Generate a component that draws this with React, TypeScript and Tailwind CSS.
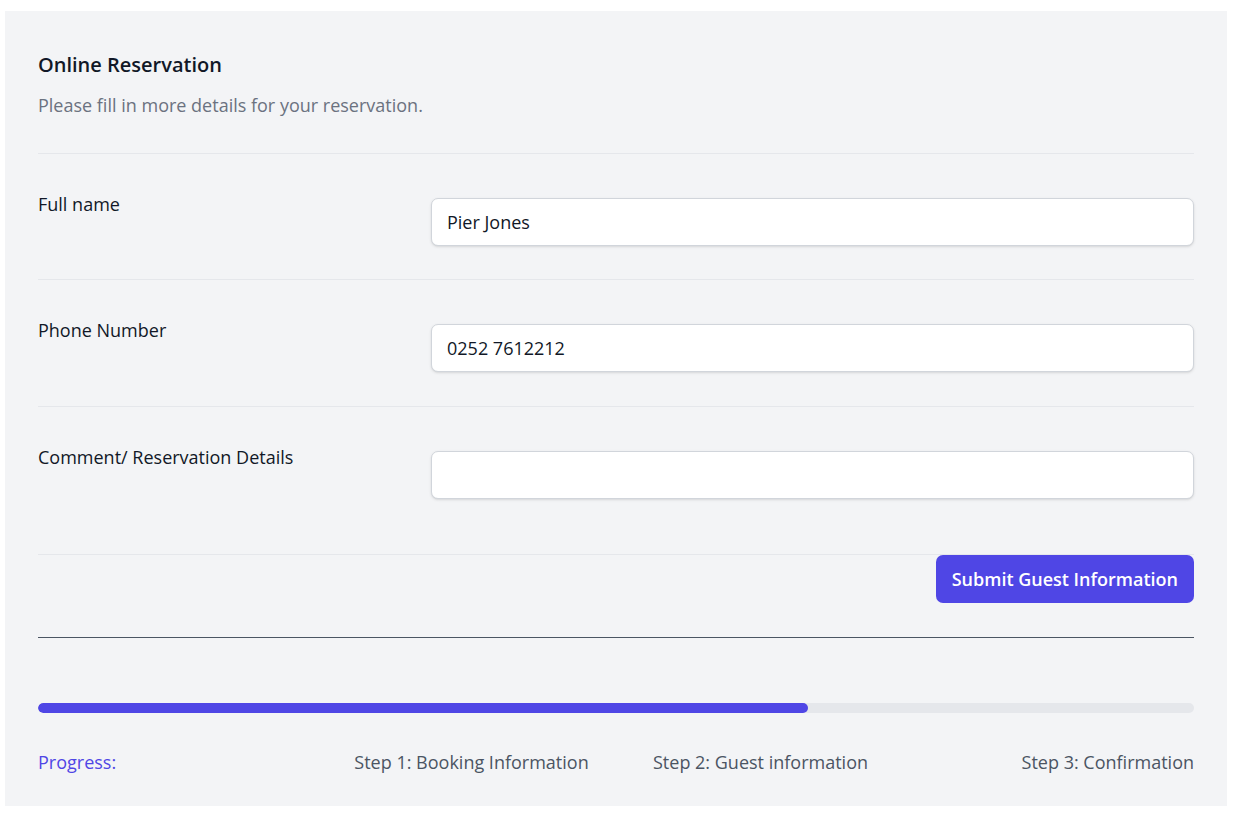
import React from "react";

const rows = [
  { label: "Full name", value: "Pier Jones", pb: "pb-[33px]" },
  { label: "Phone Number", value: "0252 7612212", pb: "pb-[34px]" },
  { label: "Comment/ Reservation Details", value: "", pb: "pb-[55px]" },
];

export default function App() {
  return (
    <div className="min-h-screen bg-white pl-[5px] pt-[11px] font-['Open_Sans',sans-serif]">
      <div className="w-[1222px] bg-[#f3f4f6] px-[33px] pt-[40px] pb-[30px]">
        <h2 className="text-[20px] font-semibold leading-[28px] text-[#111827]">Online Reservation</h2>
        <p className="mt-[12px] text-[18px] leading-[28px] text-[#6b7280]">
          Please fill in more details for your reservation.
        </p>
        <div className="mt-[34px] border-t border-[#e5e7eb]">
          {rows.map((r) => (
            <div
              key={r.label}
              className={`grid grid-cols-[373px_1fr] gap-x-[20px] border-b border-[#e5e7eb] pt-[36px] ${r.pb}`}
            >
              <label className="text-[18px] leading-[28px] text-[#111827]">{r.label}</label>
              <input
                type="text"
                defaultValue={r.value}
                className="mt-[8px] h-[48px] w-full rounded-[7px] border border-[#d1d5db] bg-white px-[15px] text-[18px] text-[#111827] shadow-sm outline-none"
              />
            </div>
          ))}
        </div>
        <div className="flex justify-end">
          <button
            type="button"
            className="h-[48px] rounded-[7px] bg-[#4f46e5] px-[16px] text-[18px] font-semibold text-white"
          >
            Submit Guest Information
          </button>
        </div>
        <div className="mt-[34px] border-t border-[#4b5563]" />
        <div className="mt-[65px]">
          <div className="h-[10px] w-full overflow-hidden rounded-full bg-[#e5e7eb]">
            <div className="h-full w-[770px] rounded-full bg-[#4f46e5]" />
          </div>
          <div className="mt-[35px] grid grid-cols-4 text-[18px] leading-[28px] text-[#4b5563]">
            <div className="text-[#4f46e5]">Progress:</div>
            <div className="text-center">Step 1: Booking Information</div>
            <div className="text-center">Step 2: Guest information</div>
            <div className="text-right">Step 3: Confirmation</div>
          </div>
        </div>
      </div>
    </div>
  );
}
